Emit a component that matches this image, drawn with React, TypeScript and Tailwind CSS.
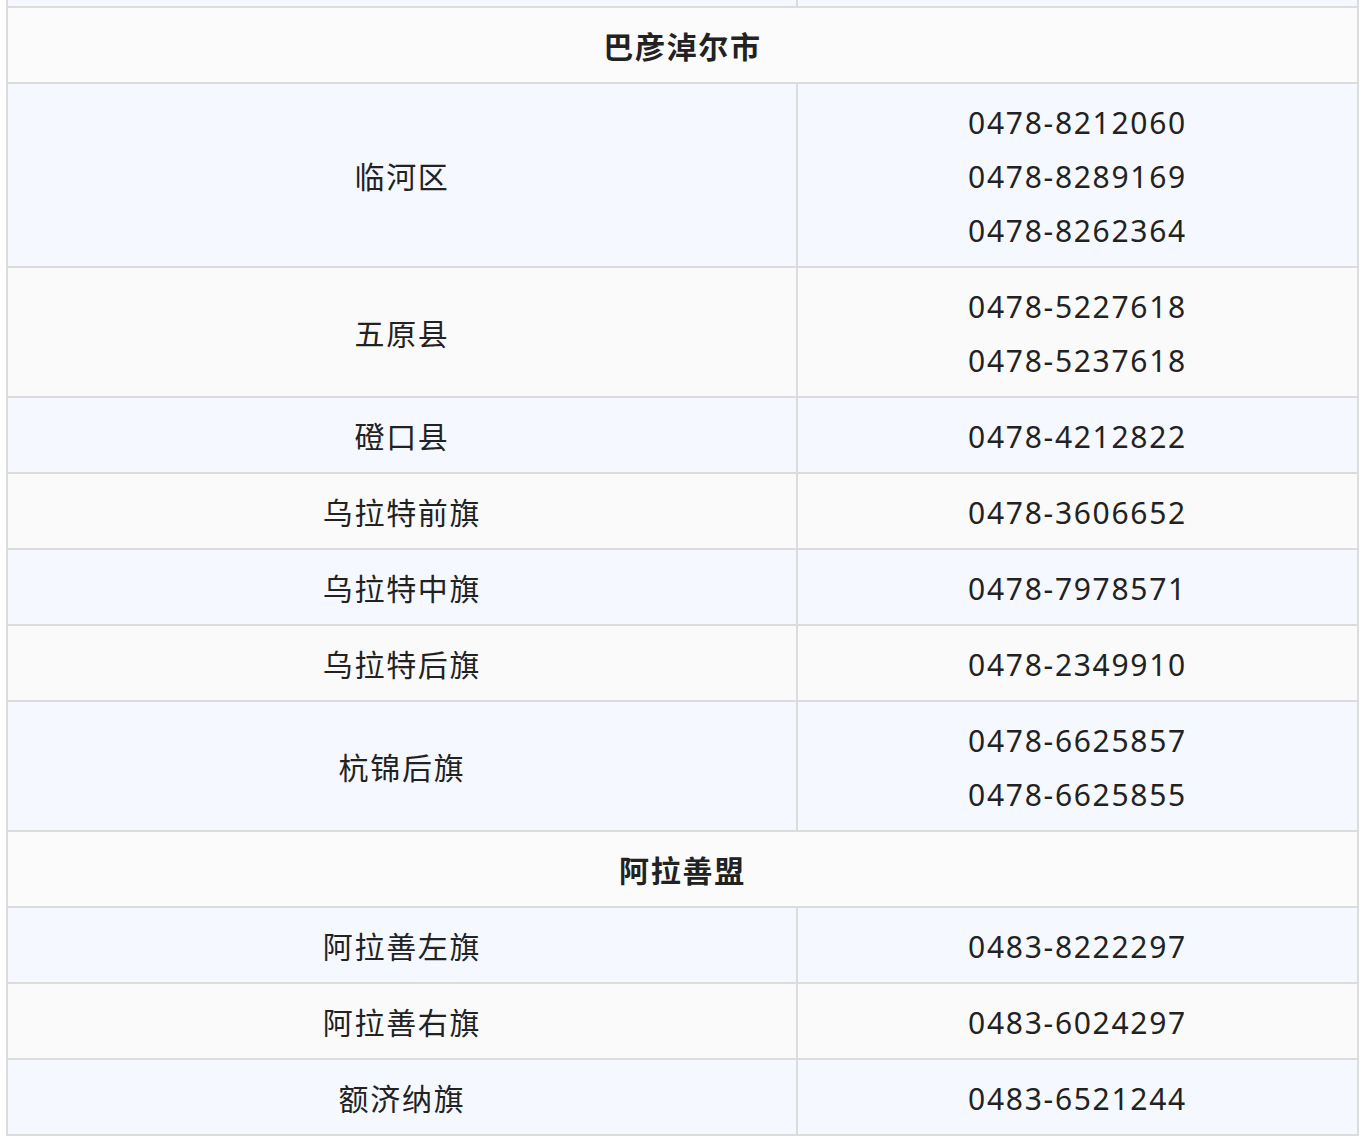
const ROWS: { name: string; phones: string[]; header?: boolean }[] = [
  { name: "巴彦淖尔市", phones: [], header: true },
  { name: "临河区", phones: ["0478-8212060", "0478-8289169", "0478-8262364"] },
  { name: "五原县", phones: ["0478-5227618", "0478-5237618"] },
  { name: "磴口县", phones: ["0478-4212822"] },
  { name: "乌拉特前旗", phones: ["0478-3606652"] },
  { name: "乌拉特中旗", phones: ["0478-7978571"] },
  { name: "乌拉特后旗", phones: ["0478-2349910"] },
  { name: "杭锦后旗", phones: ["0478-6625857", "0478-6625855"] },
  { name: "阿拉善盟", phones: [], header: true },
  { name: "阿拉善左旗", phones: ["0483-8222297"] },
  { name: "阿拉善右旗", phones: ["0483-6024297"] },
  { name: "额济纳旗", phones: ["0483-6521244"] },
];

export default function App() {
  return (
    <div
      className="min-h-[1141px] bg-white text-[#222] text-[30px] leading-[54px] tracking-[1.7px]"
      style={{ fontFamily: '"Noto Sans", "Noto Sans CJK SC", sans-serif' }}
    >
      <div className="ml-[6px] w-[1353px] border-x-2 border-[#dcdcdc]">
        {/* tail of the previous row, scrolled off */}
        <div className="grid grid-cols-[790px_1fr] h-[8px] border-b-2 border-[#dcdcdc] bg-[#f5f9ff]">
          <div className="border-r-2 border-[#dcdcdc]" />
          <div />
        </div>

        {ROWS.map((row, i) =>
          row.header ? (
            <div
              key={row.name}
              className="pt-[12px] pb-[8px] text-center font-bold bg-[#fbfbfb] border-b-2 border-[#dcdcdc]"
            >
              {row.name}
            </div>
          ) : (
            <div
              key={row.name}
              className={
                "grid grid-cols-[790px_1fr] border-b-2 border-[#dcdcdc] " +
                (i % 2 === 1 ? "bg-[#f5f9ff]" : "bg-[#fafafa]")
              }
            >
              <div className="flex items-center justify-center border-r-2 border-[#dcdcdc] pt-[12px] pb-[8px]">
                {row.name}
              </div>
              <div className="flex flex-col items-center pt-[12px] pb-[8px]">
                {row.phones.map((p) => (
                  <span key={p}>{p}</span>
                ))}
              </div>
            </div>
          )
        )}
      </div>
    </div>
  );
}
